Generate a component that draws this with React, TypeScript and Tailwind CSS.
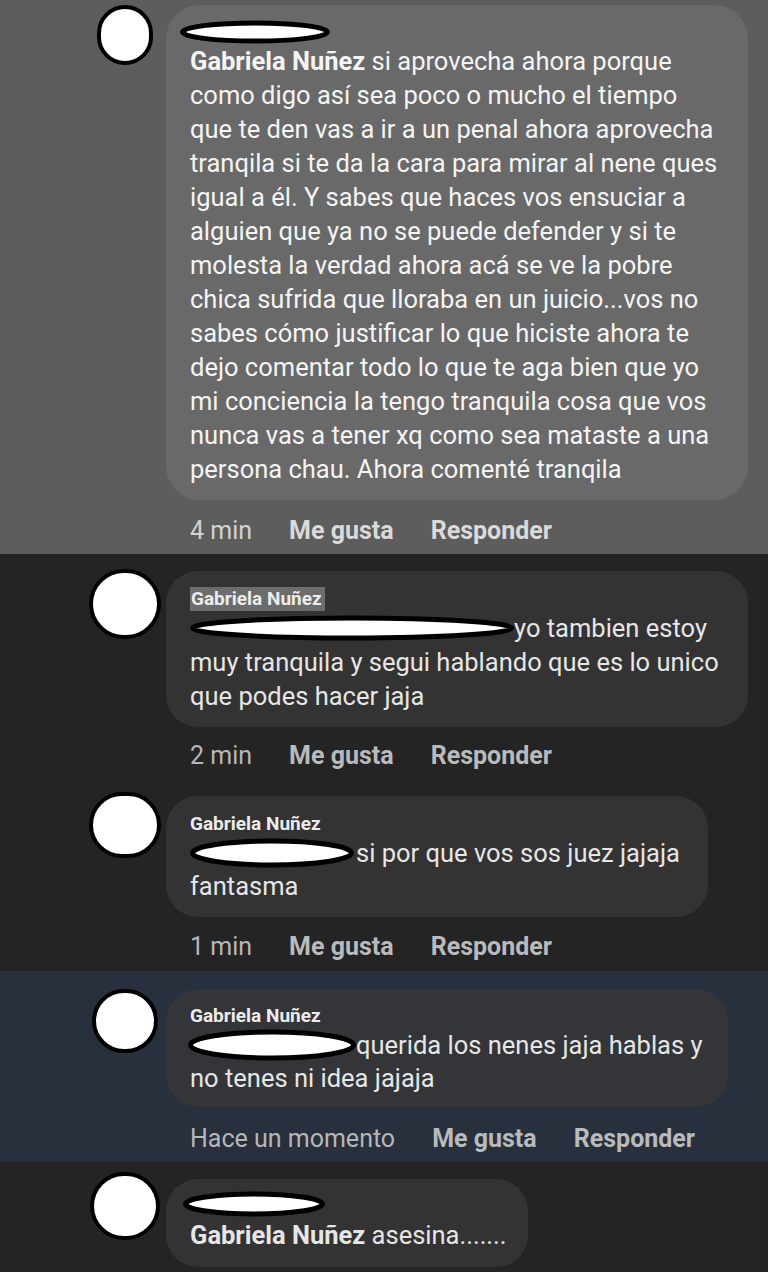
import React from "react";

const FONT = { fontFamily: "Roboto, 'Noto Sans', 'Liberation Sans', sans-serif" };

// hand-drawn censor oval
function Oval({ w, h, className = "" }: { w: number; h: number; className?: string }) {
  return (
    <svg width={w} height={h} viewBox={`0 0 ${w} ${h}`} className={`inline-block align-middle ${className}`}>
      <ellipse cx={w / 2} cy={h / 2} rx={w / 2 - 2.5} ry={h / 2 - 3} fill="#fff" stroke="#000" strokeWidth={5} />
    </svg>
  );
}

function Avatar({ w, h, mt = 0 }: { w: number; h: number; mt?: number }) {
  return (
    <div className="w-[74px] flex justify-center shrink-0" style={{ marginTop: mt }}>
      <div className="rounded-full bg-white border-[4px] border-black" style={{ width: w, height: h }} />
    </div>
  );
}

function Actions({ time, light, mt }: { time: string; light?: boolean; mt: number }) {
  const timeCls = light ? "text-[#d2d2d2]" : "text-[#b6b7ba]";
  const boldCls = light ? "text-[#dadada]" : "text-[#b9babd]";
  return (
    <div className="pl-[190px] h-[32px] flex items-center gap-[37px] text-[25px] leading-[32px]" style={{ marginTop: mt }}>
      <span className={timeCls}>{time}</span>
      <span className={`${boldCls} font-bold`}>Me gusta</span>
      <span className={`${boldCls} font-bold`}>Responder</span>
    </div>
  );
}

const firstLines = [
  "como digo así sea poco o mucho el tiempo",
  "que te den vas a ir a un penal ahora aprovecha",
  "tranqila si te da la cara para mirar al nene ques",
  "igual a él. Y sabes que haces vos ensuciar a",
  "alguien que ya no se puede defender y si te",
  "molesta la verdad ahora acá se ve la pobre",
  "chica sufrida que lloraba en un juicio...vos no",
  "sabes cómo justificar lo que hiciste ahora te",
  "dejo comentar todo lo que te aga bien que yo",
  "mi conciencia la tengo tranquila cosa que vos",
  "nunca vas a tener xq como sea mataste a una",
  "persona chau. Ahora comenté tranqila",
];

export default function App() {
  return (
    <div className="w-[768px] h-[1272px] overflow-hidden bg-[#242424]" style={FONT}>
      {/* highlighted top comment */}
      <section className="bg-[#5d5d5d] pt-[5px] pb-[7px]">
        <div className="flex pl-[88px]">
          <Avatar w={56} h={60} />
          <div className="ml-[4px] w-[582px] h-[495px] rounded-[34px] bg-[#696969] pl-[24px] pt-[14px] text-[25.5px] leading-[34px] text-[#f4f4f4]">
            <div className="h-[25px] -ml-[10px] flex items-center">
              <Oval w={150} h={24} />
            </div>
            <div className="whitespace-nowrap">
              <span className="font-bold">Gabriela Nuñez</span> si aprovecha ahora porque
            </div>
            {firstLines.map((l) => (
              <div key={l} className="whitespace-nowrap">{l}</div>
            ))}
          </div>
        </div>
        <Actions time="4 min" light mt={15} />
      </section>

      {/* replies */}
      <section className="bg-[#242424] pt-[17px] pb-[8px]">
        <div className="flex pl-[88px]">
          <Avatar w={72} h={70} mt={-2} />
          <div className="ml-[4px] w-[582px] h-[156px] rounded-[32px] bg-[#333333] pl-[24px] pt-[16px] text-[25.5px] leading-[34px] text-[#e6e6e6]">
            <div className="h-[24px] flex items-center">
              <span className="bg-[#6c6c6c] text-[#ececec] font-bold text-[19px] leading-[24px] pl-[1px] pr-[3px]">Gabriela Nuñez</span>
            </div>
            <div className="whitespace-nowrap flex items-center">
              <Oval w={324} h={26} /> yo tambien estoy
            </div>
            <div className="whitespace-nowrap">muy tranquila y segui hablando que es lo unico</div>
            <div className="whitespace-nowrap">que podes hacer jaja</div>
          </div>
        </div>
        <Actions time="2 min" mt={13} />

        <div className="flex pl-[88px] mt-[24px]">
          <Avatar w={72} h={66} mt={-4} />
          <div className="ml-[4px] w-[542px] h-[121px] rounded-[32px] bg-[#333333] pl-[24px] pt-[16px] text-[25.5px] leading-[32px] text-[#e6e6e6]">
            <div className="h-[24px] flex items-center">
              <span className="text-[#ececec] font-bold text-[19px] leading-[24px]">Gabriela Nuñez</span>
            </div>
            <div className="whitespace-nowrap flex items-center h-[34px]">
              <Oval w={164} h={30} className="mr-[2px]" />si por que vos sos juez jajaja
            </div>
            <div className="whitespace-nowrap">fantasma</div>
          </div>
        </div>
        <Actions time="1 min" mt={14} />
      </section>

      <section className="bg-[#27303c] pt-[18px] pb-[7px]">
        <div className="flex pl-[88px]">
          <Avatar w={66} h={64} />
          <div className="ml-[4px] w-[562px] h-[118px] rounded-[32px] bg-[#333539] pl-[24px] pt-[15px] text-[25.5px] leading-[33px] text-[#e6e6e6]">
            <div className="h-[24px] flex items-center">
              <span className="text-[#ececec] font-bold text-[19px] leading-[24px]">Gabriela Nuñez</span>
            </div>
            <div className="whitespace-nowrap flex items-center h-[34px]">
              <Oval w={168} h={32} className="-ml-[2px]" />querida los nenes jaja hablas y
            </div>
            <div className="whitespace-nowrap">no tenes ni idea jajaja</div>
          </div>
        </div>
        <Actions time="Hace un momento" mt={16} />
      </section>

      <section className="bg-[#242424] pt-[17px]">
        <div className="flex pl-[88px]">
          <Avatar w={70} h={68} mt={-7} />
          <div className="ml-[4px] w-[362px] h-[88px] rounded-[32px] bg-[#333333] pl-[24px] pt-[10px] text-[25.5px] leading-[34px] text-[#e6e6e6]">
            <div className="h-[29px] -ml-[7px] flex items-center">
              <Oval w={142} h={26} />
            </div>
            <div className="whitespace-nowrap">
              <span className="font-bold">Gabriela Nuñez</span> asesina.......
            </div>
          </div>
        </div>
      </section>
    </div>
  );
}
